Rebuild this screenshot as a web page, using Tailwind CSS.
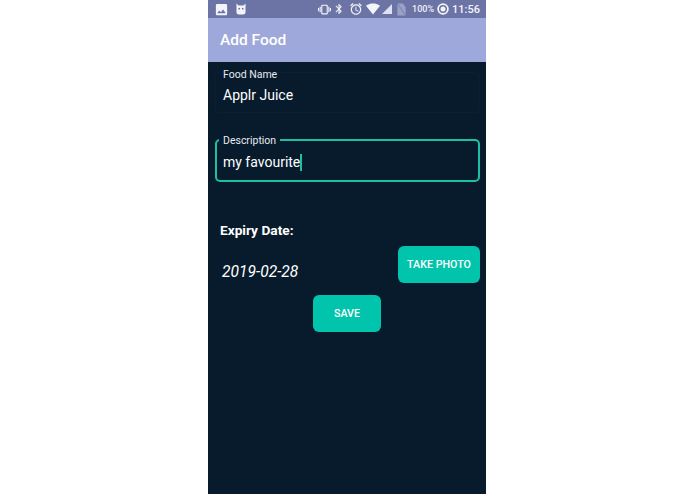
<!DOCTYPE html>
<html>
<head>
  <title>Add Food</title>
  <script src="https://cdn.jsdelivr.net/npm/@tailwindcss/browser@4"></script>
</head>
<body class="bg-white h-[494px] overflow-hidden font-['Roboto',sans-serif]">
  <div class="ml-[208px] w-[278px] h-[494px] flex flex-col bg-[#071b2d] text-white">
    <!-- status bar -->
    <div class="h-[18px] flex items-center bg-[#6c74a6] pl-[6px] pr-[6px]">
      <svg viewBox="0 0 24 24" class="w-[15px] h-[15px] shrink-0" fill="#f4f5fb"><path d="M21 19V5a2 2 0 0 0-2-2H5a2 2 0 0 0-2 2v14a2 2 0 0 0 2 2h14a2 2 0 0 0 2-2zM8.500 13.500l2.500 3 3.500-4.500 4.500 6H5l3.500-4.500z"/></svg>
      <svg viewBox="0 0 24 24" class="w-[12px] h-[12px] ml-[6px] shrink-0" fill="#f4f5fb" fill-rule="evenodd"><path d="M3 1l4 4h10l4-4v8.500V18a5 5 0 0 1-5 5H8a5 5 0 0 1-5-5zM8.500 9.500a1.800 1.800 0 1 0 0 3.600 1.800 1.800 0 0 0 0-3.600zM15.500 9.500a1.800 1.800 0 1 0 0 3.600 1.800 1.800 0 0 0 0-3.600z"/></svg>
      <div class="ml-auto flex items-center shrink-0">
        <svg viewBox="0 0 24 24" class="w-[13px] h-[13px] shrink-0" fill="#f4f5fb"><path d="M0 15h2V9H0v6zm3 2h2V7H3v10zm19-8v6h2V9h-2zm-3 8h2V7h-2v10zM16.500 3h-9C6.670 3 6 3.670 6 4.500v15c0 .83.67 1.500 1.500 1.500h9c.83 0 1.500-.67 1.500-1.500v-15c0-.83-.67-1.500-1.500-1.500zM16 19H8V5h8v14z"/></svg>
        <svg viewBox="0 0 24 24" class="w-[12px] h-[12px] ml-[2px] shrink-0" fill="#f4f5fb"><path d="M17.710 7.710L12 2h-1v7.590L6.410 5 5 6.410 10.590 12 5 17.590 6.410 19 11 14.410V22h1l5.710-5.710-4.300-4.290 4.300-4.290zM13 5.830l1.880 1.880L13 9.590V5.830zm1.880 10.460L13 18.170v-3.760l1.880 1.880z"/></svg>
        <svg viewBox="0 0 24 24" class="w-[14px] h-[14px] ml-[4px] shrink-0" fill="#f4f5fb"><path d="M22 5.720l-4.600-3.860-1.290 1.530 4.600 3.860L22 5.720zM7.880 3.390L6.600 1.860 2 5.710l1.290 1.530 4.590-3.850zM12.500 8H11v6l4.750 2.850.75-1.230-4-2.370V8zM12 4c-4.970 0-9 4.030-9 9s4.030 9 9 9 9-4.030 9-9-4.030-9-9-9zm0 16c-3.870 0-7-3.130-7-7s3.130-7 7-7 7 3.130 7 7-3.130 7-7 7z"/></svg>
        <svg viewBox="0 0 24 24" class="w-[14px] h-[14px] ml-[3px] shrink-0" fill="#f4f5fb"><path d="M12 21.500L24 6.500C23.500 6.100 18.900 2.500 12 2.500S.5 6.100 0 6.500z"/></svg>
        <svg viewBox="0 0 24 24" class="w-[12px] h-[12px] ml-[1px] shrink-0" fill="#dfe1ef"><path d="M2 22h20V2z"/></svg>
        <svg viewBox="0 0 24 24" class="w-[9px] h-[13px] ml-[4px] shrink-0" preserveAspectRatio="none" fill="#9aa0c6"><path d="M1 1h15l7 7v15H1z"/><path d="M1 1l22 22" stroke="#6c74a6" stroke-width="1.500"/></svg>
        <span class="ml-[6px] text-[9px] font-medium text-[#eef0f8] leading-none">100%</span>
        <svg viewBox="0 0 24 24" class="w-[12px] h-[12px] ml-[3px] shrink-0"><circle cx="12" cy="12" r="9.800" fill="none" stroke="#f4f5fb" stroke-width="3.500"/><circle cx="12" cy="12" r="5" fill="#f4f5fb"/></svg>
        <span class="ml-[3px] text-[11px] font-medium text-[#f4f5fb] leading-none">11:56</span>
      </div>
    </div>
    <!-- toolbar -->
    <div class="h-[44px] flex items-center bg-[#9fa8da] pl-[12px] pt-[2px] text-[15.500px] font-medium">Add Food</div>
    <!-- form -->
    <div class="flex flex-col pl-[7px] pr-[6px] pt-[10px] flex-1">
      <div class="relative h-[41px] border border-[#0c1f30] rounded-[4px] pl-[7px] flex items-center pt-[6px] text-[14px]">
        <span class="absolute left-[7px] top-[-5px] text-[10.500px] leading-[13px] text-[#e6e9ee]">Food Name</span>
        Applr Juice
      </div>
      <div class="relative h-[43px] mt-[26px] border-2 border-[#1dbfa6] rounded-[5px] pl-[6px] flex items-center pt-[4px] text-[14px]">
        <span class="absolute left-[2px] top-[-7px] px-[4px] bg-[#071b2d] text-[10.500px] leading-[13px] text-[#e6e9ee]">Description</span>
        my favourite<span class="inline-block w-[1.500px] h-[17px] bg-[#1dbfa6]"></span>
      </div>
      <div class="mt-[40px] pl-[5px] text-[13.700px] font-bold leading-[16px]">Expiry Date:</div>
      <div class="flex justify-between mt-[8px]">
        <span class="pl-[7px] pt-[17px] text-[15.600px] italic leading-[19px]">2019-02-28</span>
        <button class="w-[82px] h-[37px] pt-[1px] rounded-[6px] bg-[#00c4ab] text-[10.700px] font-medium">TAKE PHOTO</button>
      </div>
      <button class="self-start ml-[98px] w-[68px] h-[37px] pt-[2px] mt-[12px] rounded-[6px] bg-[#00c4ab] text-[10.700px] font-medium">SAVE</button>
    </div>
  </div>
</body>
</html>
